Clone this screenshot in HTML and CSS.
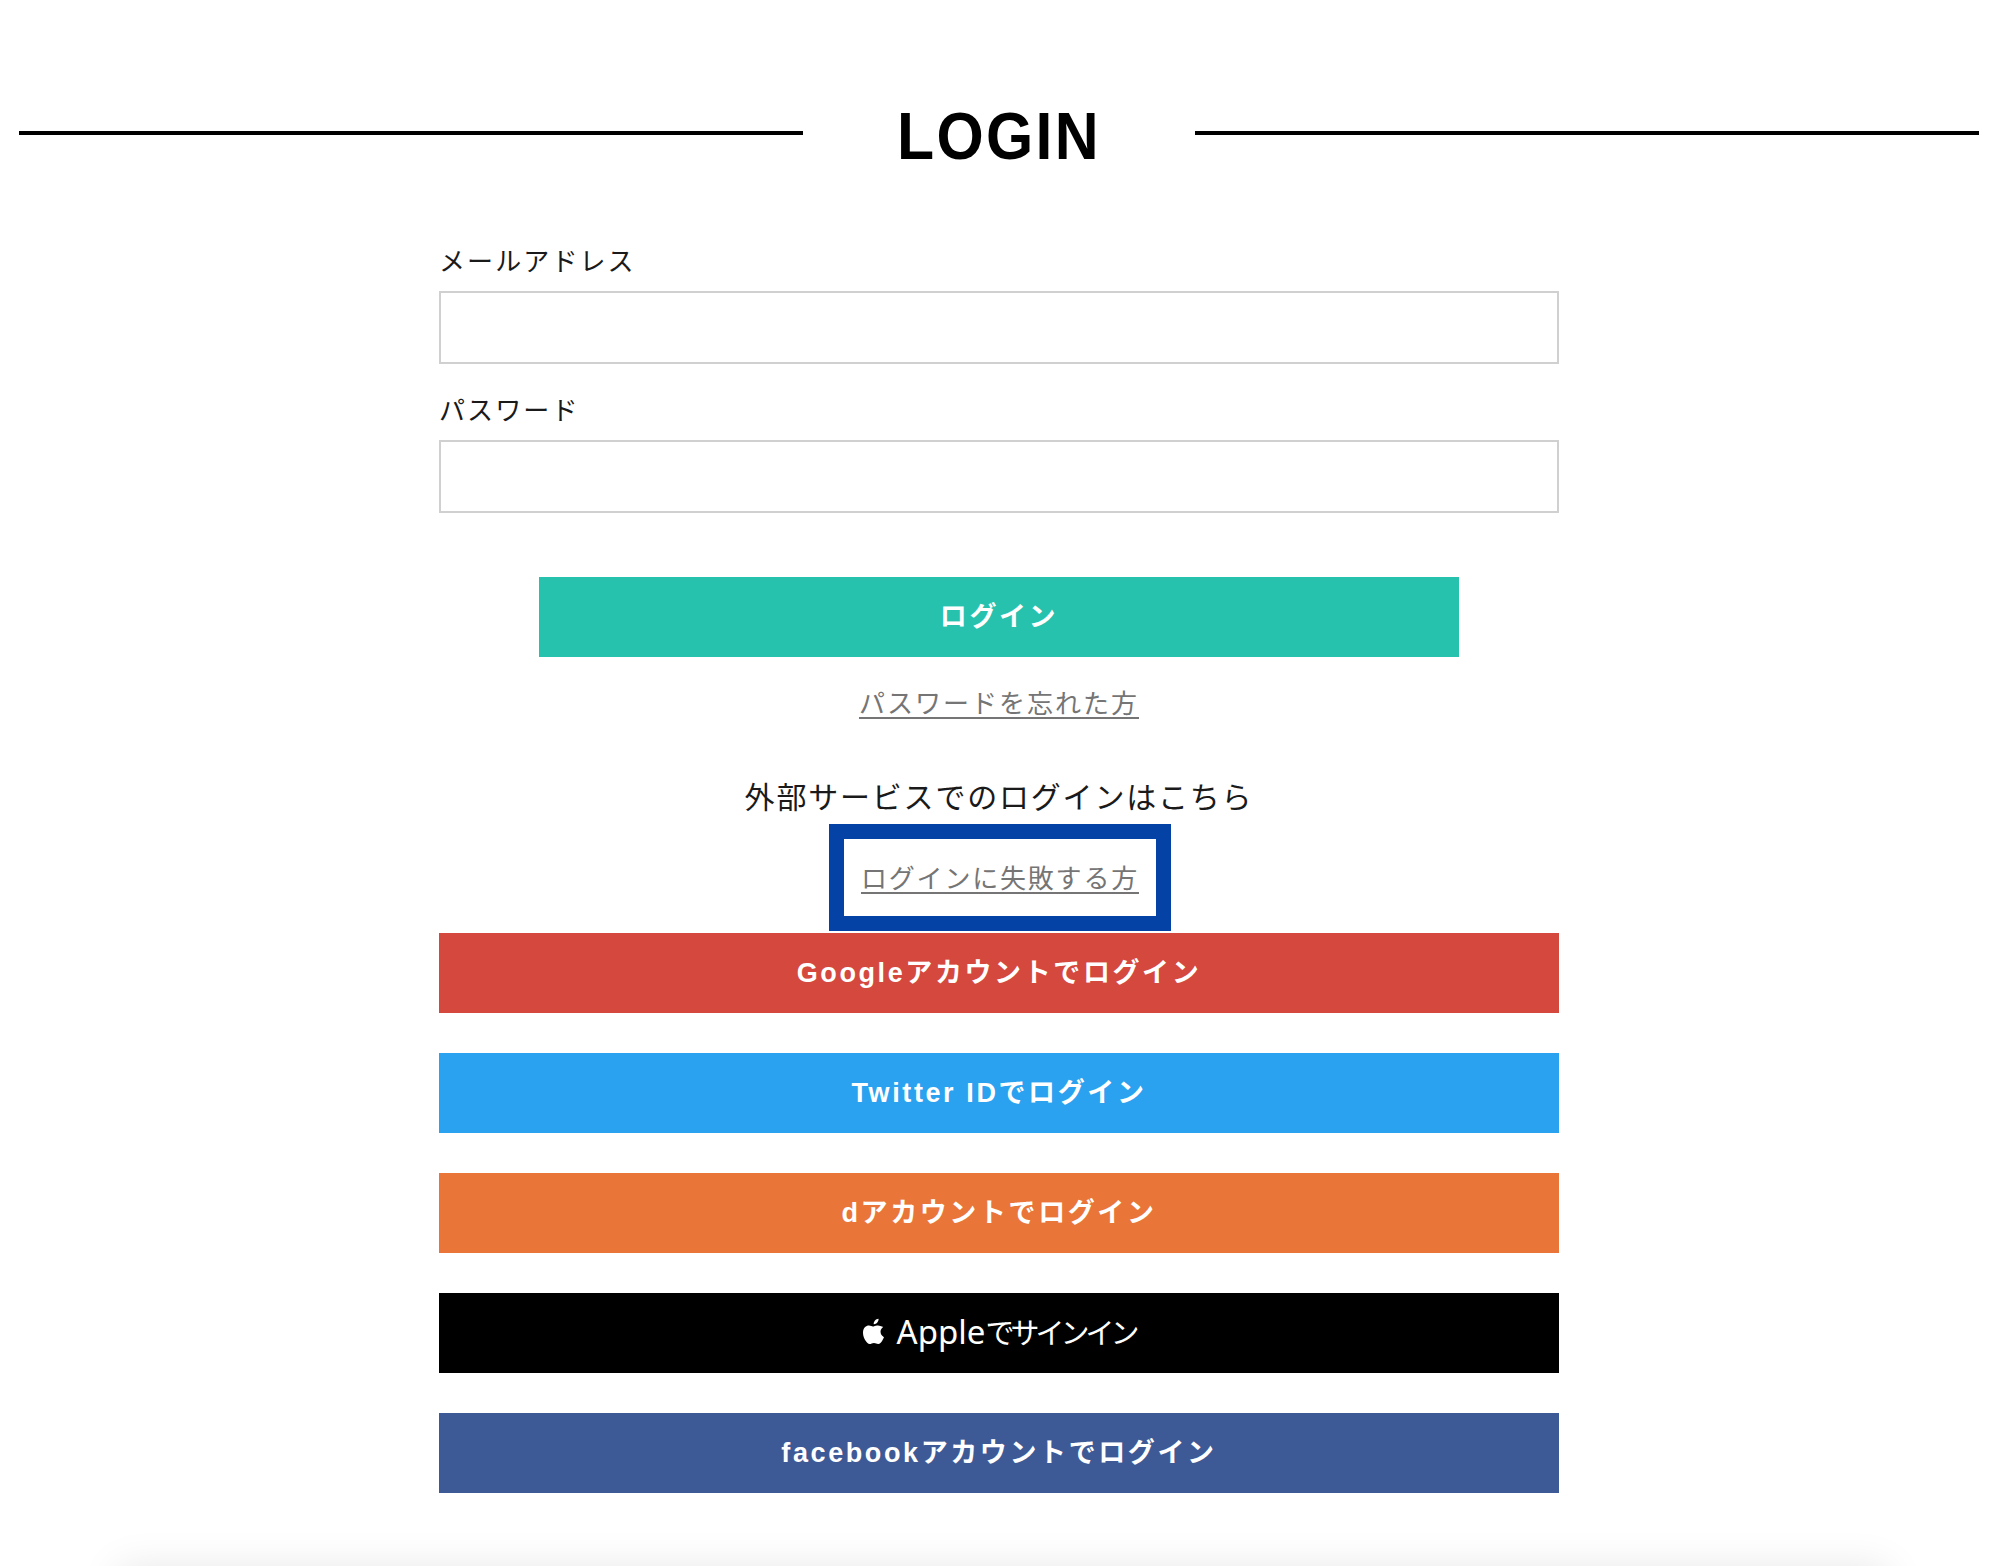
FILE: index.html
```html
<!DOCTYPE html>
<html lang="ja">
<head>
<meta charset="utf-8">
<title>LOGIN</title>
<link rel="stylesheet" href="styles.css">
</head>
<body>
<main class="page">
  <header class="title-row">
    <span class="title-line"></span>
    <h1 class="title">LOGIN</h1>
    <span class="title-line"></span>
  </header>
  <form class="login">
    <div class="field">
      <label class="field-label" for="mail">メールアドレス</label>
      <input class="field-input" id="mail" type="text">
    </div>
    <div class="field">
      <label class="field-label" for="pass">パスワード</label>
      <input class="field-input" id="pass" type="password">
    </div>
    <button class="btn btn-login" type="button">ログイン</button>
    <a class="link link-forgot" href="#">パスワードを忘れた方</a>
    <p class="external-heading">外部サービスでのログインはこちら</p>
    <div class="notice"><a class="link link-notice" href="#">ログインに失敗する方</a></div>
    <div class="providers">
      <button class="btn btn-google" type="button">Googleアカウントでログイン</button>
      <button class="btn btn-twitter" type="button">Twitter IDでログイン</button>
      <button class="btn btn-d" type="button">dアカウントでログイン</button>
      <button class="btn btn-apple" type="button">
        <svg class="apple-icon" viewBox="0 0 814 1000" aria-hidden="true"><path fill="#fff" d="M788 341c-6 4-108 62-108 190 0 149 130 201 134 203-1 3-21 72-69 143-43 62-88 124-156 124s-86-40-165-40c-77 0-104 41-167 41s-106-57-156-127C43 793 0 675 0 563c0-180 117-275 232-275 61 0 112 40 150 40 37 0 94-43 164-43 26 0 122 2 242 56zM554 171c28-34 49-81 49-127 0-7-1-13-2-18-47 2-103 31-136 70-26 30-51 77-51 124 0 7 1 14 2 16 3 1 8 1 12 1 42 0 95-28 126-66z"/></svg>
        <span class="apple-text"><span class="apple-latin">Apple</span>でサインイン</span>
      </button>
      <button class="btn btn-facebook" type="button">facebookアカウントでログイン</button>
    </div>
  </form>
</main>
<footer class="footer"></footer>
</body>
</html>
```

FILE: styles.css
```css
* {
  box-sizing: border-box;
}

html,
body {
  height: 1566px;
  margin: 0;
  overflow: hidden;
  background: #fff;
}

body {
  color: #1a1a1a;
  font-family: "Noto Sans CJK JP", "Noto Sans", sans-serif;
}

.page {
  width: 1960px;
  margin-left: 19px;
}

.title-row {
  display: flex;
  align-items: flex-start;
  height: 240px;
  padding-top: 100px;
}

.title-line {
  flex: 1;
  height: 4px;
  margin-top: 31px;
  background: #000;
}

.title {
  width: 392px;
  margin: 0;
  color: #000;
  font-family: "Liberation Sans", sans-serif;
  font-size: 66px;
  font-weight: 700;
  line-height: 72px;
  letter-spacing: 2.5px;
  text-align: center;
  transform: scaleX(0.92);
}

.login {
  display: flex;
  flex-direction: column;
  align-items: center;
  width: 1120px;
  margin: 0 auto;
}

.field {
  width: 100%;
  margin-bottom: 25px;
}

.field-label {
  display: block;
  margin-bottom: 11px;
  font-size: 26px;
  line-height: 40px;
  letter-spacing: 2.1px;
}

.field-input {
  display: block;
  width: 100%;
  height: 73px;
  border: 2px solid #d0d0d0;
  background: #fff;
}

.btn {
  display: flex;
  align-items: center;
  justify-content: center;
  width: 100%;
  height: 80px;
  padding: 0 0 6px;
  border: 0;
  color: #fff;
  font-family: "Liberation Sans", "Noto Sans CJK JP", sans-serif;
  font-size: 27px;
  font-weight: 700;
  letter-spacing: 2.6px;
}

.btn-login {
  width: 920px;
  margin-top: 39px;
  background: #26c2ae;
}

.btn-google {
  background: #d5483e;
}

.btn-twitter {
  background: #2aa2ef;
}

.btn-d {
  background: #e97538;
}

.btn-apple {
  gap: 13px;
  padding-bottom: 4px;
  background: #000;
  font-weight: 400;
  letter-spacing: 0;
}

.btn-facebook {
  background: #3e5a96;
}

.apple-icon {
  width: 21px;
  height: 26px;
}

.apple-text {
  font-family: "Noto Sans CJK JP", sans-serif;
  font-size: 29px;
  letter-spacing: -4px;
}

.apple-latin {
  font-family: "Noto Sans", sans-serif;
  font-size: 33px;
  letter-spacing: 0;
}

.link {
  color: #757575;
  font-size: 26px;
  line-height: 40px;
  letter-spacing: 2px;
  text-decoration: underline;
  text-decoration-thickness: 2px;
  text-underline-offset: 4px;
}

.link-forgot {
  margin-top: 25px;
}

.link-notice {
  letter-spacing: 1.8px;
}

.external-heading {
  margin: 51px 0 0;
  font-size: 30px;
  line-height: 44px;
  letter-spacing: 1.8px;
}

.notice {
  display: flex;
  align-items: center;
  justify-content: center;
  width: 342px;
  height: 107px;
  margin: 7px 0 0 2px;
  padding-bottom: 2px;
  border: 15px solid #0542a5;
}

.providers {
  display: flex;
  flex-direction: column;
  gap: 40px;
  width: 100%;
  margin-top: 2px;
}

.footer {
  width: 1770px;
  height: 120px;
  margin: 75px 0 0 118px;
  background: #fff;
  box-shadow: 0 0 40px rgba(0, 0, 0, 0.1);
}
```
